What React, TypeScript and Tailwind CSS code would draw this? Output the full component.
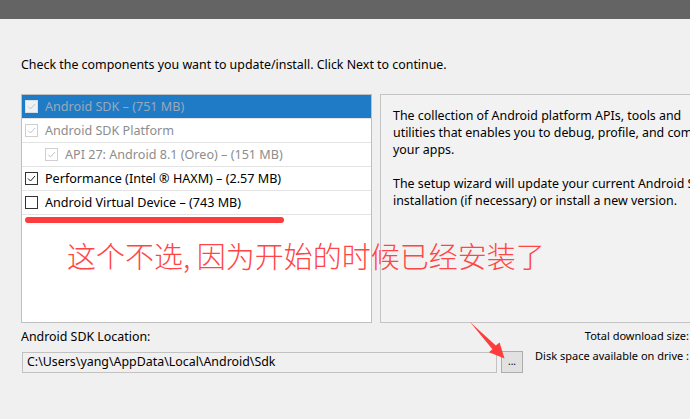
import React from "react";

const UI = { fontFamily: '"Noto Sans", "Liberation Sans", sans-serif' };

function Check({ state }: { state: "dis" | "on" | "off" | "sel" }) {
  const border =
    state === "dis" ? "border-[#cfcfcf]" : state === "sel" ? "border-[#d7dde4]" : "border-[#333333]";
  const bg = state === "sel" ? "bg-[#eef1f4]" : "bg-white";
  const stroke = state === "on" ? "#222222" : "#c4c4c4";
  return (
    <span className={`w-[13px] h-[13px] shrink-0 border ${border} ${bg} flex items-center justify-center`}>
      {state !== "off" && (
        <svg width="11" height="11" viewBox="0 0 11 11">
          <path d="M2 5.5 L4.5 8 L9 3" fill="none" stroke={stroke} strokeWidth="1" />
        </svg>
      )}
    </span>
  );
}

function Row({
  label,
  state,
  indent,
  selected,
}: {
  label: string;
  state: "dis" | "on" | "off" | "sel";
  indent?: boolean;
  selected?: boolean;
}) {
  const color = selected
    ? "text-[#9aa9b9]"
    : state === "dis"
    ? "text-[#8d8d8d]"
    : "text-black";
  return (
    <div
      className={`h-[24px] border-b border-[#e3e3e3] flex items-center gap-[7px] ${
        indent ? "pl-[23px]" : "pl-[3px]"
      } ${selected ? "bg-[#1f7bc6] border-[#1f7bc6]" : ""}`}
    >
      <Check state={state} />
      <span className={`text-[12.6px] leading-[17px] whitespace-nowrap ${color}`}>{label}</span>
    </div>
  );
}

export default function App() {
  return (
    <div className="relative w-[690px] h-[419px] overflow-hidden bg-[#f0f0f0]" style={UI}>
      <div className="h-[19px] bg-[#646464]" />
      <div className="px-[21px] pt-[37px] text-[12.4px] leading-[17px] text-black whitespace-nowrap">
        Check the components you want to update/install. Click Next to continue.
      </div>
      <div className="flex gap-[8px] pl-[21px] mt-[21px]">
        <div className="w-[351px] h-[229px] shrink-0 bg-white border border-[#bfbfbf]">
          <Row label="Android SDK – (751 MB)" state="sel" selected />
          <Row label="Android SDK Platform" state="dis" />
          <Row label="API 27: Android 8.1 (Oreo) – (151 MB)" state="dis" indent />
          <Row label="Performance (Intel ® HAXM) – (2.57 MB)" state="on" />
          <Row label="Android Virtual Device – (743 MB)" state="off" />
        </div>
        <div className="w-[310px] h-[229px] shrink-0 bg-[#f2f2f2] border border-[#c4c4c4] border-r-0 pl-[12px] pt-[12px] text-[12.4px] leading-[17px] text-black whitespace-nowrap overflow-hidden">
          <div>The collection of Android platform APIs, tools and</div>
          <div>utilities that enables you to debug, profile, and com</div>
          <div>your apps.</div>
          <div className="h-[17px]" />
          <div>The setup wizard will update your current Android S</div>
          <div>installation (if necessary) or install a new version.</div>
        </div>
      </div>
      <div className="flex pl-[21px] mt-[5px]">
        <div className="w-[514px] shrink-0">
          <div className="text-[12.4px] leading-[17px] text-black whitespace-nowrap">Android SDK Location:</div>
          <div className="flex items-center gap-[4px] mt-[6px]">
            <div className="w-[475px] h-[21px] ml-[1px] border border-[#c2c2c2] bg-[#f0f0f0] flex items-center pl-[4px] text-[12.4px] text-black whitespace-nowrap">
              C:\Users\yang\AppData\Local\Android\Sdk
            </div>
            <div className="w-[22px] h-[22px] border border-[#adadad] bg-[#e1e1e1] flex items-center justify-center text-[10px] leading-none text-black pb-[2px]">
              ...
            </div>
          </div>
        </div>
        <div className="text-[11px] leading-[17px] text-black whitespace-nowrap text-right w-[154px]">
          <div className="-mt-[1px]">Total download size:</div>
          <div className="mt-[3px]">Disk space available on drive :</div>
        </div>
      </div>

      {/* annotations */}
      <div className="absolute left-[25px] top-[217px] w-[259px] h-[6px] rounded-full bg-[#ff3c3c]" />
      <div
        className="absolute left-[67px] top-[239px] text-[29px] leading-[32px] text-[#ff4545] font-light whitespace-nowrap"
        style={{ fontFamily: '"Noto Sans CJK SC", sans-serif' }}
      >
        这个不选, 因为开始的时候已经安装了
      </div>
      <svg className="absolute left-0 top-0" width="690" height="419" viewBox="0 0 690 419">
        <polygon
          points="470,322 495.8,345.6 499.6,342.4 504.5,358.5 489,352.2 492.4,349.2"
          fill="#ff3c3c"
        />
      </svg>
    </div>
  );
}
